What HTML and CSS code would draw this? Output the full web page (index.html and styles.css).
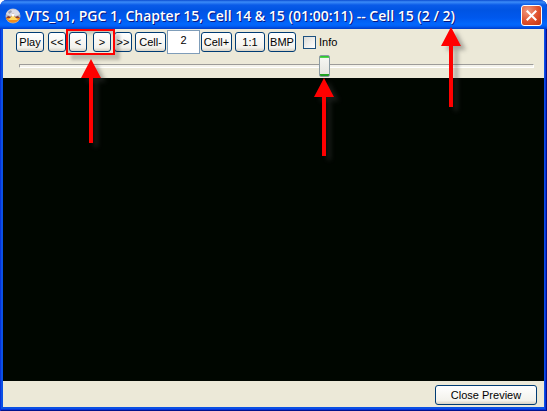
FILE: index.html
```html
<!DOCTYPE html>
<html lang="en">
<head>
  <meta charset="UTF-8" />
  <meta name="viewport" content="width=device-width, initial-scale=1" />
  <title>VTS_01, PGC 1 - Preview</title>
  <link rel="stylesheet" href="styles.css">
</head>
<body>

<!-- arrow shared by all the callouts -->
<svg width="0" height="0" class="defs">
  <symbol id="arrow" viewBox="0 0 20 84" preserveAspectRatio="xMidYMin slice">
    <path d="M10 0 L20 19 H12 V84 H8 V19 H0 Z" fill="#ff0000"/>
  </symbol>
</svg>

<div class="window">
  <header class="titlebar">
    <svg class="app-icon" viewBox="0 0 16 16">
      <circle cx="8" cy="8" r="7.5" fill="#b4b4c4"/>
      <path d="M1 6 A7.5 7.5 0 0 1 15 6 L11 8 H5 Z" fill="#dcdce6"/>
      <path d="M3 4 L6 2 L7 4 L4 6 Z" fill="#a2a2b0"/>
      <path d="M1 10 L3 8 L6 9 L8 5 L10 9 L13 8 L15 10 V11 H1 Z" fill="#8c3c28"/>
      <path d="M1 10 H15 A7.5 7.5 0 0 1 1 10 Z" fill="#f08c1c"/>
      <path d="M3 12 L6 9 L8 6 L10 9 L13 12 Z" fill="#ffd860"/>
      <circle cx="8" cy="7" r="1.5" fill="#fff"/>
    </svg>
    <h1>VTS_01, PGC 1, Chapter 15, Cell 14 &amp; 15 (01:00:11) -- Cell 15 (2 / <span class="marked">2)<svg class="arrow arrow-title"><use href="#arrow"/></svg></span></h1>
    <button class="btn-close" aria-label="Close">
      <svg viewBox="0 0 20 20"><path d="M5 5 L15 15 M15 5 L5 15" stroke="#fff" stroke-width="2.2"/></svg>
    </button>
  </header>

  <div class="controls">
    <div class="toolbar">
      <button class="btn btn-play">Play</button>
      <button class="btn btn-step">&lt;&lt;</button>
      <div class="step-group marked">
        <button class="btn btn-step">&lt;</button>
        <button class="btn btn-step">&gt;</button>
        <svg class="arrow arrow-step"><use href="#arrow"/></svg>
      </div>
      <button class="btn btn-step">&gt;&gt;</button>
      <div class="cell-group">
        <button class="btn btn-cell">Cell-</button>
        <input type="text" class="cell-number" value="2" aria-label="Cell number" />
        <button class="btn btn-cell">Cell+</button>
      </div>
      <button class="btn btn-size">1:1</button>
      <button class="btn btn-bmp">BMP</button>
      <input type="checkbox" id="info" />
      <label for="info">Info</label>
    </div>
    <div class="seek">
      <input type="range" min="0" max="1000" value="595" aria-label="Position" />
      <svg class="arrow arrow-seek"><use href="#arrow"/></svg>
    </div>
  </div>

  <main class="video"></main>

  <footer>
    <button class="btn btn-preview">Close Preview</button>
  </footer>
</div>

</body>
</html>
```
FILE: styles.css
```css
*, *::before, *::after { margin: 0; padding: 0; box-sizing: border-box; }
body {
  font-family: "Liberation Sans", Arial, sans-serif;
  font-size: 11px;
  color: #000;
  background: #fff;
}
.defs { position: absolute; }
.window {
  min-height: 100vh;
  display: flex;
  flex-direction: column;
  background: #0a50e4;
  border-radius: 7px 7px 0 0;
  padding: 0 3px 4px;
  box-shadow: inset 1px 0 #0831d9, inset -1px -1px #00138c, inset -2px -2px #0831d9;
}

/* title bar */
.titlebar {
  height: 29px;
  margin: 0 -3px;
  padding: 2px 5px 0 5px;
  display: flex;
  align-items: center;
  border-radius: 7px 7px 0 0;
  background: linear-gradient(#0a4bd0 0, #3c8cf8 2px, #0a5be8 5px, #0054e3 10px, #0058ee 18px, #0267fc 24px, #0160f8 26px, #003dc8 29px);
}
.app-icon {
  width: 16px;
  height: 16px;
  margin-right: 4px;
}
h1 {
  flex: 1;
  font-family: "Open Sans", "Trebuchet MS", sans-serif;
  font-size: 14px;
  line-height: 18px;
  font-weight: 600;
  color: #fff;
  text-shadow: 1px 1px #0a1883;
  white-space: nowrap;
}
.btn-close {
  width: 21px;
  height: 21px;
  border: 1px solid #fff;
  border-radius: 3px;
  background: radial-gradient(circle at 30% 25%, #f09a80, #e0512c 55%, #c23410);
}
.btn-close svg {
  display: block;
  width: 19px;
  height: 19px;
}

/* controls */
.controls {
  background: #ece9d8;
  height: 49px;
}
.toolbar {
  display: flex;
  align-items: center;
  gap: 3px;
  height: 26px;
  padding-left: 13px;
}
.btn {
  height: 20px;
  border: 1px solid #003c74;
  border-radius: 3px;
  background: linear-gradient(#fff, #f3f2ec 80%, #d8d2c4);
  font-family: inherit;
  font-size: 11px;
  line-height: 18px;
  color: #000;
  white-space: nowrap;
}
.btn-play {
  width: 28px;
  margin-right: 1px;
}
.btn-step { width: 18px; }
.btn-cell { width: 31px; }
.btn-size { width: 30px; }
.btn-bmp { width: 28px; }
.btn-preview { width: 102px; }
.step-group {
  display: flex;
  gap: 6px;
  padding: 1px 2px 1px 1px;
  margin: 0 -4px 0 -3px;
  border: 2px solid #ff0000;
  box-shadow: 5px 5px 3px rgba(0,0,0,0.2), inset 3px 3px 3px rgba(0,0,0,0.15);
}
.cell-group {
  display: flex;
  align-items: center;
  gap: 1px;
}
.cell-number {
  width: 33px;
  height: 24px;
  padding-bottom: 4px;
  border: 1px solid #7f9db9;
  background: #fff;
  font: inherit;
  text-align: center;
}
input[type="checkbox"] {
  appearance: none;
  width: 13px;
  height: 13px;
  margin-left: 4px;
  border: 1px solid #1c5180;
  background: linear-gradient(135deg, #dcdcd7, #fff);
}

/* seek bar */
.seek {
  position: relative;
  height: 23px;
  padding: 0 10px 0 16px;
}
input[type="range"] {
  appearance: none;
  display: block;
  width: 100%;
  height: 22px;
  background: transparent;
}
input[type="range"]::-webkit-slider-runnable-track {
  height: 4px;
  border: 1px solid #fff;
  border-top-color: #9d9c99;
  border-left-color: #9d9c99;
  border-radius: 1px;
  background: #f3f2ea;
}
input[type="range"]::-webkit-slider-thumb {
  appearance: none;
  width: 11px;
  height: 22px;
  margin-top: -10px;
  border: 1px solid #8a9aa2;
  border-radius: 2px;
  background: linear-gradient(#21c121 0, #5fd85f 2px, #f6f6f2 2px, #e6e6e0 18px, #21a121 18px);
}

/* callouts */
.marked { position: relative; }
.arrow {
  position: absolute;
  z-index: 1;
  width: 20px;
  height: 84px;
  pointer-events: none;
  filter: drop-shadow(5px 4px 2px rgba(60,60,60,0.4));
}
.arrow-title {
  top: 21px;
  left: -2px;
  height: 80px;
}
.arrow-step {
  top: 28px;
  left: calc(50% - 10px);
}
.arrow-seek {
  top: 23px;
  left: calc(59% - 8px);
  height: 78px;
}

.video {
  flex: 1;
  background: #000600;
}
footer {
  display: flex;
  justify-content: flex-end;
  background: #ece9d8;
  padding: 4px 7px 2px;
}
```
